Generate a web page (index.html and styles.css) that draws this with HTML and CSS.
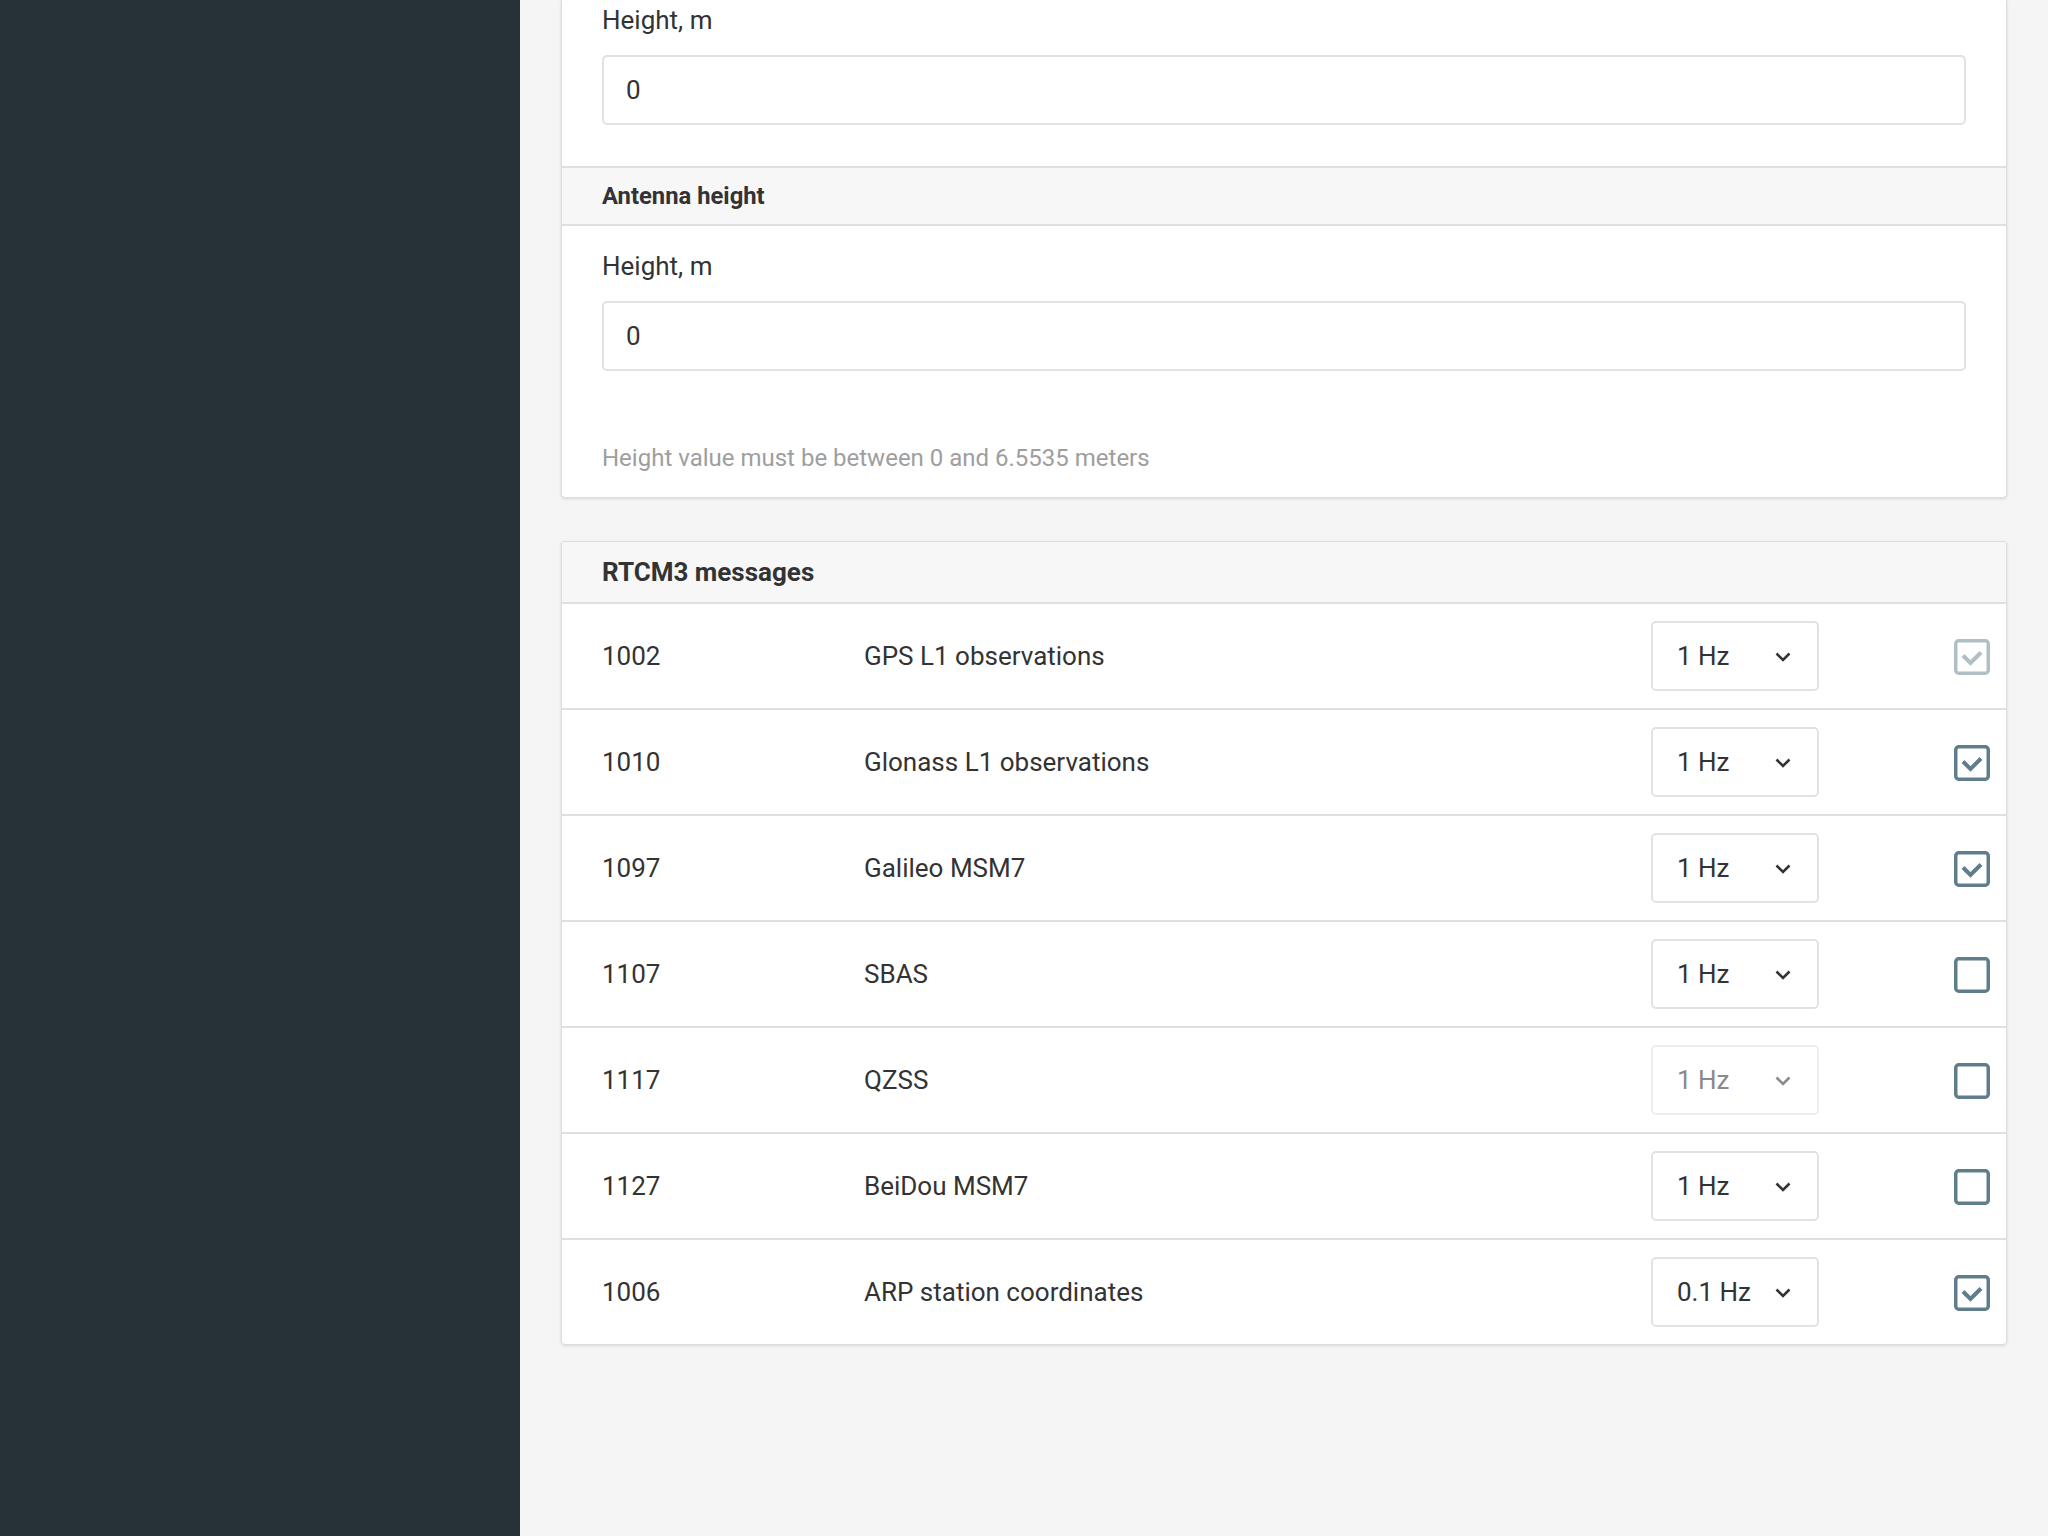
FILE: index.html
```html
<!DOCTYPE html>
<html lang="en">
<head>
<meta charset="utf-8">
<title>Base station settings</title>
<link rel="stylesheet" href="styles.css">
</head>
<body>
<div class="app">
  <aside class="sidebar"></aside>
  <main class="main">
    <section class="card card--clipped">
      <div class="card-body card-body--clipped">
        <label class="field-label">Height, m</label>
        <input class="text-input" type="text" value="0">
      </div>
      <div class="section-header">Antenna height</div>
      <div class="card-body card-body--help">
        <label class="field-label">Height, m</label>
        <input class="text-input" type="text" value="0">
        <p class="help">Height value must be between 0 and 6.5535 meters</p>
      </div>
    </section>

    <section class="card card--messages">
      <div class="card-header">RTCM3 messages</div>

      <div class="msg-row">
        <span class="msg-code">1002</span>
        <span class="msg-name">GPS L1 observations</span>
        <div class="rate-select"><span>1 Hz</span><svg class="chev" width="16" height="10" viewBox="0 0 16 10"><path d="M1.5 1.5 L8 8 L14.5 1.5" fill="none" stroke="currentColor" stroke-width="2.6"/></svg></div>
        <span class="check-cell"><svg class="check check--disabled" width="36" height="36" viewBox="0 0 36 36"><rect x="1.75" y="1.75" width="32.5" height="32.5" rx="3" fill="#fff" stroke="currentColor" stroke-width="3.5"/><path d="M9 16.5 L16.5 24 L27 13.5" fill="none" stroke="currentColor" stroke-width="4"/></svg></span>
      </div>

      <div class="msg-row">
        <span class="msg-code">1010</span>
        <span class="msg-name">Glonass L1 observations</span>
        <div class="rate-select"><span>1 Hz</span><svg class="chev" width="16" height="10" viewBox="0 0 16 10"><path d="M1.5 1.5 L8 8 L14.5 1.5" fill="none" stroke="currentColor" stroke-width="2.6"/></svg></div>
        <span class="check-cell"><svg class="check" width="36" height="36" viewBox="0 0 36 36"><rect x="1.75" y="1.75" width="32.5" height="32.5" rx="3" fill="#fff" stroke="currentColor" stroke-width="3.5"/><path d="M9 16.5 L16.5 24 L27 13.5" fill="none" stroke="currentColor" stroke-width="4"/></svg></span>
      </div>

      <div class="msg-row">
        <span class="msg-code">1097</span>
        <span class="msg-name">Galileo MSM7</span>
        <div class="rate-select"><span>1 Hz</span><svg class="chev" width="16" height="10" viewBox="0 0 16 10"><path d="M1.5 1.5 L8 8 L14.5 1.5" fill="none" stroke="currentColor" stroke-width="2.6"/></svg></div>
        <span class="check-cell"><svg class="check" width="36" height="36" viewBox="0 0 36 36"><rect x="1.75" y="1.75" width="32.5" height="32.5" rx="3" fill="#fff" stroke="currentColor" stroke-width="3.5"/><path d="M9 16.5 L16.5 24 L27 13.5" fill="none" stroke="currentColor" stroke-width="4"/></svg></span>
      </div>

      <div class="msg-row">
        <span class="msg-code">1107</span>
        <span class="msg-name">SBAS</span>
        <div class="rate-select"><span>1 Hz</span><svg class="chev" width="16" height="10" viewBox="0 0 16 10"><path d="M1.5 1.5 L8 8 L14.5 1.5" fill="none" stroke="currentColor" stroke-width="2.6"/></svg></div>
        <span class="check-cell"><svg class="check" width="36" height="36" viewBox="0 0 36 36"><rect x="1.75" y="1.75" width="32.5" height="32.5" rx="3" fill="#fff" stroke="currentColor" stroke-width="3.5"/></svg></span>
      </div>

      <div class="msg-row">
        <span class="msg-code">1117</span>
        <span class="msg-name">QZSS</span>
        <div class="rate-select rate-select--disabled"><span>1 Hz</span><svg class="chev" width="16" height="10" viewBox="0 0 16 10"><path d="M1.5 1.5 L8 8 L14.5 1.5" fill="none" stroke="currentColor" stroke-width="2.6"/></svg></div>
        <span class="check-cell"><svg class="check" width="36" height="36" viewBox="0 0 36 36"><rect x="1.75" y="1.75" width="32.5" height="32.5" rx="3" fill="#fff" stroke="currentColor" stroke-width="3.5"/></svg></span>
      </div>

      <div class="msg-row">
        <span class="msg-code">1127</span>
        <span class="msg-name">BeiDou MSM7</span>
        <div class="rate-select"><span>1 Hz</span><svg class="chev" width="16" height="10" viewBox="0 0 16 10"><path d="M1.5 1.5 L8 8 L14.5 1.5" fill="none" stroke="currentColor" stroke-width="2.6"/></svg></div>
        <span class="check-cell"><svg class="check" width="36" height="36" viewBox="0 0 36 36"><rect x="1.75" y="1.75" width="32.5" height="32.5" rx="3" fill="#fff" stroke="currentColor" stroke-width="3.5"/></svg></span>
      </div>

      <div class="msg-row">
        <span class="msg-code">1006</span>
        <span class="msg-name">ARP station coordinates</span>
        <div class="rate-select"><span>0.1 Hz</span><svg class="chev" width="16" height="10" viewBox="0 0 16 10"><path d="M1.5 1.5 L8 8 L14.5 1.5" fill="none" stroke="currentColor" stroke-width="2.6"/></svg></div>
        <span class="check-cell"><svg class="check" width="36" height="36" viewBox="0 0 36 36"><rect x="1.75" y="1.75" width="32.5" height="32.5" rx="3" fill="#fff" stroke="currentColor" stroke-width="3.5"/><path d="M9 16.5 L16.5 24 L27 13.5" fill="none" stroke="currentColor" stroke-width="4"/></svg></span>
      </div>
    </section>
  </main>
</div>
</body>
</html>
```

FILE: styles.css
```css
* { box-sizing: border-box; }

html, body {
  margin: 0;
  padding: 0;
  background: #f5f5f5;
  font-family: Roboto, "Liberation Sans", Arial, sans-serif;
  color: #333333;
}

.app {
  display: flex;
  min-height: 1536px;
  height: 1536px;
  overflow: hidden;
}

.sidebar {
  flex: 0 0 520px;
  background: #263238;
}

.main {
  flex: 1 1 auto;
  background: #f5f5f5;
  padding: 0 41px 0 41px;
}

.card {
  background: #ffffff;
  border: 1px solid #dddddd;
  border-radius: 4px;
  box-shadow: 0 1px 3px rgba(0, 0, 0, 0.12);
}

.card--clipped {
  border-top: 0;
  border-radius: 0 0 4px 4px;
}

.card--messages {
  margin-top: 43px;
  overflow: hidden;
}

.card-body {
  padding: 24.5px 40px 41px;
}

.card-body--clipped {
  padding-top: 5px;
}

.card-body--help {
  padding-bottom: 25px;
}

.field-label {
  display: block;
  font-size: 26px;
  line-height: 30px;
  margin-bottom: 20px;
  color: #333333;
}

.text-input {
  display: block;
  width: 100%;
  height: 70px;
  margin: 0;
  padding: 0 22px;
  border: 2px solid #e2e2e2;
  border-radius: 5px;
  background: #ffffff;
  font-family: Roboto, "Liberation Sans", Arial, sans-serif;
  font-size: 26px;
  color: #333333;
  outline: none;
}

.section-header {
  height: 60px;
  padding: 0 40px;
  background: #f7f7f7;
  border-top: 2px solid #e0e0e0;
  border-bottom: 2px solid #e0e0e0;
  font-size: 23.8px;
  font-weight: 700;
  line-height: 56px;
  color: #333333;
}

.help {
  margin: 73px 0 0;
  font-size: 24px;
  line-height: 28px;
  color: #9e9e9e;
}

.card-header {
  height: 62px;
  padding: 0 40px;
  background: #f7f7f7;
  border-bottom: 2px solid #e0e0e0;
  font-size: 26px;
  font-weight: 700;
  line-height: 60px;
  color: #333333;
}

.msg-row {
  display: grid;
  grid-template-columns: 262px 1fr 168px 171px;
  align-items: center;
  height: 106px;
  padding: 0 16px 0 40px;
  border-bottom: 2px solid #e0e0e0;
  font-size: 26px;
  color: #333333;
}

.msg-row:last-child {
  border-bottom: 0;
  height: 104px;
}

.rate-select {
  display: flex;
  align-items: center;
  justify-content: space-between;
  height: 70px;
  padding: 0 26px 0 24px;
  border: 2px solid #e2e2e2;
  border-radius: 5px;
  background: #ffffff;
  color: #333333;
}

.rate-select .chev {
  color: #333333;
  margin-top: 2px;
}

.rate-select--disabled {
  border-color: #eeeeee;
  color: #8a8a8a;
}

.rate-select--disabled .chev {
  color: #8a8a8a;
}

.check-cell {
  display: flex;
  justify-content: flex-end;
  padding-top: 3px;
}

.check {
  display: block;
  color: #607d8b;
}

.check--disabled {
  color: #b0bec5;
}
```
